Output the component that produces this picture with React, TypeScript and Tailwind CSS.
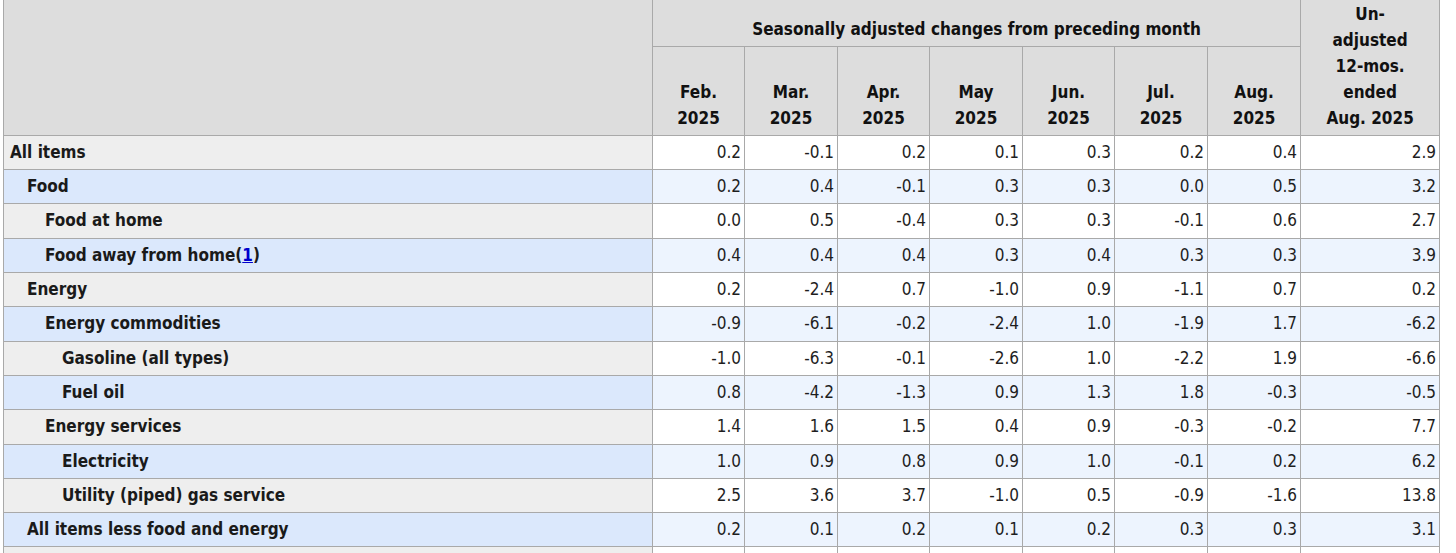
import React from "react";

type Row = { label: string; level: number; values: string[]; note?: boolean };

const ROWS: Row[] = [
  { label: "All items", level: 0, values: ["0.2", "-0.1", "0.2", "0.1", "0.3", "0.2", "0.4", "2.9"] },
  { label: "Food", level: 1, values: ["0.2", "0.4", "-0.1", "0.3", "0.3", "0.0", "0.5", "3.2"] },
  { label: "Food at home", level: 2, values: ["0.0", "0.5", "-0.4", "0.3", "0.3", "-0.1", "0.6", "2.7"] },
  { label: "Food away from home", level: 2, note: true, values: ["0.4", "0.4", "0.4", "0.3", "0.4", "0.3", "0.3", "3.9"] },
  { label: "Energy", level: 1, values: ["0.2", "-2.4", "0.7", "-1.0", "0.9", "-1.1", "0.7", "0.2"] },
  { label: "Energy commodities", level: 2, values: ["-0.9", "-6.1", "-0.2", "-2.4", "1.0", "-1.9", "1.7", "-6.2"] },
  { label: "Gasoline (all types)", level: 3, values: ["-1.0", "-6.3", "-0.1", "-2.6", "1.0", "-2.2", "1.9", "-6.6"] },
  { label: "Fuel oil", level: 3, values: ["0.8", "-4.2", "-1.3", "0.9", "1.3", "1.8", "-0.3", "-0.5"] },
  { label: "Energy services", level: 2, values: ["1.4", "1.6", "1.5", "0.4", "0.9", "-0.3", "-0.2", "7.7"] },
  { label: "Electricity", level: 3, values: ["1.0", "0.9", "0.8", "0.9", "1.0", "-0.1", "0.2", "6.2"] },
  { label: "Utility (piped) gas service", level: 3, values: ["2.5", "3.6", "3.7", "-1.0", "0.5", "-0.9", "-1.6", "13.8"] },
  { label: "All items less food and energy", level: 1, values: ["0.2", "0.1", "0.2", "0.1", "0.2", "0.3", "0.3", "3.1"] },
];

// row heights in px, so the borders land where the screenshot has them
const HEIGHTS = [34, 34, 35, 34, 34, 35, 34, 34, 35, 34, 34, 34];

const INDENT = ["pl-[6px]", "pl-[23px]", "pl-[41px]", "pl-[58px]"];

const MONTHS = ["Feb.", "Mar.", "Apr.", "May", "Jun.", "Jul.", "Aug."];

const font = { fontFamily: '"DejaVu Sans Condensed", "DejaVu Sans", Verdana, sans-serif' };

export default function App() {
  return (
    <div className="h-[553px] w-[1456px] overflow-hidden bg-white" style={font}>
      <table className="table-fixed border-collapse ml-[3px] -mt-[6px] w-[1437px] text-[17px] text-[#1e1e1e]">
        <colgroup>
          <col className="w-[649px]" />
          <col className="w-[92px]" />
          <col className="w-[93px]" />
          <col className="w-[92px]" />
          <col className="w-[93px]" />
          <col className="w-[92px]" />
          <col className="w-[93px]" />
          <col className="w-[93px]" />
          <col className="w-[139px]" />
        </colgroup>
        <thead>
          <tr className="h-[52px]">
            <th rowSpan={2} className="bg-[#dddddd] border border-[#a9a9a9]" />
            <th
              colSpan={7}
              className="bg-[#dddddd] border border-[#a9a9a9] align-bottom pb-[4px] font-bold leading-[26px] text-[#111]"
            >
              Seasonally adjusted changes from preceding month
            </th>
            <th
              rowSpan={2}
              className="bg-[#dddddd] border border-[#a9a9a9] align-bottom pb-[4px] font-bold leading-[26px] text-[#111]"
            >
              Un-
              <br />
              adjusted
              <br />
              12-mos.
              <br />
              ended
              <br />
              Aug. 2025
            </th>
          </tr>
          <tr className="h-[89px]">
            {MONTHS.map((m) => (
              <th
                key={m}
                className="bg-[#dddddd] border border-[#a9a9a9] align-bottom pb-[4px] font-bold leading-[26px] text-[#111]"
              >
                {m}
                <br />
                2025
              </th>
            ))}
          </tr>
        </thead>
        <tbody>
          {ROWS.map((row, i) => {
            const even = i % 2 === 1;
            return (
              <tr key={row.label} style={{ height: HEIGHTS[i] }}>
                <th
                  className={`border border-[#a9a9a9] text-left font-bold text-[#1a1a1a] ${INDENT[row.level]} ${
                    even ? "bg-[#dbe8fc]" : "bg-[#eeeeee]"
                  }`}
                >
                  {row.label}
                  {row.note && (
                    <>
                      (<span className="text-[#0000cc] underline">1</span>)
                    </>
                  )}
                </th>
                {row.values.map((v, j) => (
                  <td
                    key={j}
                    className={`border border-[#a9a9a9] text-right pr-[3px] ${even ? "bg-[#edf4fe]" : "bg-white"}`}
                  >
                    {v}
                  </td>
                ))}
              </tr>
            );
          })}
          {/* next row of the table, cut off by the bottom of the screenshot */}
          <tr className="h-[34px]">
            <th className="border border-[#a9a9a9] bg-[#eeeeee]" />
            {Array.from({ length: 8 }).map((_, j) => (
              <td key={j} className="border border-[#a9a9a9] bg-white" />
            ))}
          </tr>
        </tbody>
      </table>
    </div>
  );
}
